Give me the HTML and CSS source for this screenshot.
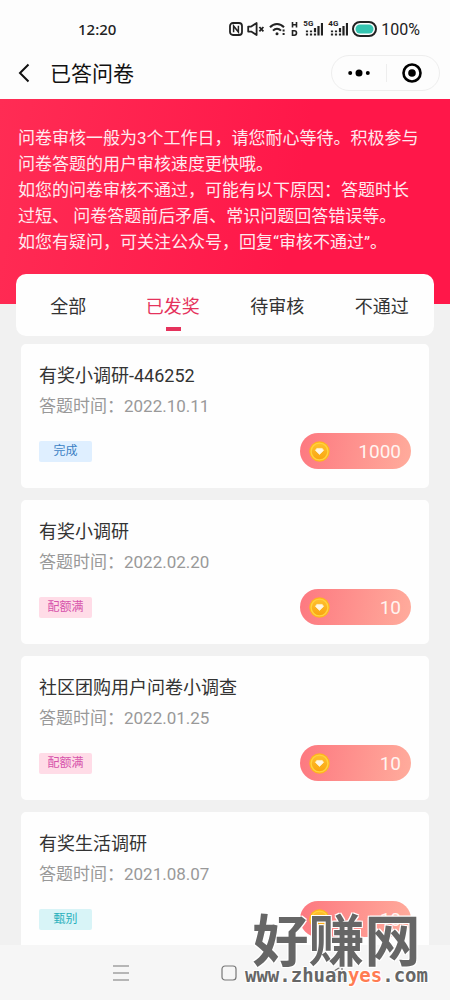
FILE: index.html
```html
<!DOCTYPE html>
<html lang="zh-CN">
<head>
<meta charset="utf-8">
<meta name="viewport" content="width=device-width, initial-scale=1">
<title>已答问卷</title>
<link rel="stylesheet" href="styles.css">
</head>
<body>
<svg class="defs" aria-hidden="true">
  <defs>
    <linearGradient id="gold" x1="0" y1="0" x2="0" y2="1"><stop offset="0" stop-color="#ffc12e"/><stop offset="1" stop-color="#f9a410"/></linearGradient>
    <symbol id="coin" viewBox="0 0 21 21">
      <circle cx="10.5" cy="10.5" r="10.2" fill="#ffb51c"/>
      <circle cx="10.5" cy="10.5" r="8.4" fill="url(#gold)" stroke="#ffd23f" stroke-width="1.4"/>
      <path d="M7.8 7.4h5.4l1.4 2-4.1 4-4.1-4z" fill="#fff7e2" stroke="#fff0c8" stroke-width=".8" stroke-linejoin="round"/>
    </symbol>
  </defs>
</svg>
<div class="screen">
  <div class="status">
    <time class="clock">12:20</time>
    <div class="indicators">
      <svg width="14" height="14" viewBox="0 0 14 14" fill="none" stroke="#222" stroke-width="1.8"><rect x="1" y="1" width="12" height="12" rx="3"/><path d="M4.6 10.3V4l4.8 6V3.7" stroke-width="1.5"/></svg>
      <svg width="18" height="14" viewBox="0 0 18 14" fill="none" stroke="#222" stroke-width="1.8" stroke-linejoin="round"><path d="M1.2 4.6h3L9.6 1v12L4.2 9.6h-3z"/><path d="M12.4 5l4 4.4M16.4 5l-4 4.4"/></svg>
      <svg width="18" height="14" viewBox="0 0 18 14" fill="none" stroke="#222" stroke-width="2"><path d="M1 5.2c4-4.3 10-4.3 14 0M4 8.6c2.4-2.5 5.6-2.5 8 0"/><circle cx="8" cy="11.8" r="1.5" fill="#222" stroke="none"/><path d="M14.6 7.4v2M14.6 11v2" /></svg>
      <svg width="7" height="14" viewBox="0 0 7 14" fill="none" stroke="#222" stroke-width="1.6"><path d="M1.5 0v5.6M5.5 0v5.6M1.5 2.8h4M1.5 8.8v4.4h1.8q2.2 0 2.2-2.2t-2.2-2.2z"/></svg>
      <span class="signal"><span class="generation">5G</span><svg width="20" height="14" viewBox="0 0 20 14" fill="none" stroke="#222" stroke-width="2.2"><path d="M4 8.4v1.8M4 11.4v2.2M8 8.4v1.8M8 11.4v2.2M12 6v4.2M12 11.4v2.2M15.5 4v9.6M19 1v12.6"/></svg></span>
      <span class="signal"><span class="generation">4G</span><svg width="20" height="14" viewBox="0 0 20 14" fill="none" stroke="#222" stroke-width="2.2"><path d="M4 8.4v1.8M4 11.4v2.2M8 8.4v1.8M8 11.4v2.2M12 6v4.2M12 11.4v2.2M15.5 4v9.6M19 1v12.6"/></svg></span>
      <svg width="25" height="16" viewBox="0 0 25 16"><rect x="1" y="1" width="23" height="14" rx="7" fill="#fff" stroke="#222" stroke-width="2"/><rect x="3.5" y="3.5" width="18" height="9" rx="4.5" fill="#35c4b0"/></svg>
      <span class="charge">100%</span>
    </div>
  </div>
  <header class="titlebar">
    <button class="back" aria-label="返回"><svg width="12" height="20" viewBox="0 0 12 20" fill="none" stroke="#111" stroke-width="2"><path d="M10.5 1.5L2 10l8.5 8.5"/></svg></button>
    <h1 class="title">已答问卷</h1>
    <div class="capsule">
      <button class="capsule-button" aria-label="更多"><svg width="22" height="8" viewBox="0 0 22 8"><circle cx="2.2" cy="4" r="2"/><circle cx="11" cy="4" r="3.5"/><circle cx="19.8" cy="4" r="2"/></svg></button>
      <button class="capsule-button" aria-label="关闭"><svg width="20" height="20" viewBox="0 0 20 20"><circle cx="10" cy="10" r="8.5" fill="none" stroke="#000" stroke-width="2.6"/><circle cx="10" cy="10" r="3.8"/></svg></button>
    </div>
  </header>
  <main class="content">
    <section class="notice">
      <p>问卷审核一般为3个工作日，请您耐心等待。积极参与<br>问卷答题的用户审核速度更快哦。</p>
      <p>如您的问卷审核不通过，可能有以下原因：答题时长<br>过短、 问卷答题前后矛盾、常识问题回答错误等。</p>
      <p>如您有疑问，可关注公众号，回复“审核不通过”。</p>
    </section>
    <nav class="tabs">
      <button class="tab">全部</button>
      <button class="tab active">已发奖</button>
      <button class="tab">待审核</button>
      <button class="tab">不通过</button>
    </nav>
    <div class="list">
      <article class="card">
        <h2 class="name">有奖小调研-446252</h2>
        <p class="date">答题时间：2022.10.11</p>
        <div class="result"><span class="tag done">完成</span><span class="reward"><svg width="21" height="21"><use href="#coin"/></svg>1000</span></div>
      </article>
      <article class="card">
        <h2 class="name">有奖小调研</h2>
        <p class="date">答题时间：2022.02.20</p>
        <div class="result"><span class="tag full">配额满</span><span class="reward"><svg width="21" height="21"><use href="#coin"/></svg>10</span></div>
      </article>
      <article class="card">
        <h2 class="name">社区团购用户问卷小调查</h2>
        <p class="date">答题时间：2022.01.25</p>
        <div class="result"><span class="tag full">配额满</span><span class="reward"><svg width="21" height="21"><use href="#coin"/></svg>10</span></div>
      </article>
      <article class="card">
        <h2 class="name">有奖生活调研</h2>
        <p class="date">答题时间：2021.08.07</p>
        <div class="result"><span class="tag screened">甄别</span><span class="reward"><svg width="21" height="21"><use href="#coin"/></svg>10</span></div>
      </article>
    </div>
  </main>
  <footer class="system">
    <button class="system-button" aria-label="菜单"><svg width="16" height="16" viewBox="0 0 16 16" stroke="#777" stroke-width="1.2"><path d="M0 1h16M0 8h16M0 15h16"/></svg></button>
    <button class="system-button" aria-label="主屏幕"><svg width="16" height="16" viewBox="0 0 16 16" fill="none" stroke="#777" stroke-width="1.2"><rect x="1" y="1" width="14" height="14" rx="3"/></svg></button>
    <button class="system-button" aria-label="后退"><svg width="16" height="16" viewBox="0 0 16 16" fill="none" stroke="#777" stroke-width="1.2"><path d="M13 1L2 8l11 7z" stroke-linejoin="round"/></svg></button>
  </footer>
  <div class="watermark">
    <span class="brand">好赚网</span>
    <span class="site">www.zhuan<span class="accent">yes</span>.com</span>
  </div>
</div>
</body>
</html>
```
FILE: styles.css
```css
* { box-sizing: border-box; }
body, h1, h2, p { margin: 0; font-weight: 400; }
body {
  background: #f1f1f1;
  color: #333;
  font-family: Roboto, "Noto Sans CJK SC", sans-serif;
}
button {
  padding: 0;
  border: 0;
  background: none;
  color: inherit;
  font: inherit;
}
svg { display: block; flex: none; }
.defs { position: absolute; width: 0; height: 0; }

.screen {
  position: relative;
  display: flex;
  flex-direction: column;
  height: 100vh;
  overflow: hidden;
}

.status {
  display: flex;
  justify-content: space-between;
  align-items: center;
  height: 46px;
  padding: 12px 30px 0 78px;
  background: #fdfdfd;
  color: #222;
}
.clock { font: 500 15px "Noto Sans", sans-serif; }
.indicators { display: flex; align-items: center; gap: 4px; }
.signal { position: relative; margin-left: 1px; }
.generation {
  position: absolute;
  top: -2px;
  left: 0;
  font-size: 8px;
  font-weight: 700;
  line-height: 8px;
}
.charge { font-size: 16px; }

.titlebar {
  display: flex;
  align-items: center;
  height: 53px;
  padding: 0 10px 0 18px;
  background: #fdfdfd;
  color: #111;
}
.back { padding-right: 20px; }
.title { flex: 1; padding-top: 2px; font-size: 21px; line-height: 30px; }
.capsule {
  display: flex;
  width: 109px;
  height: 36px;
  border: 1px solid #eee;
  border-radius: 18px;
}
.capsule-button { flex: 1; display: grid; place-items: center; }
.capsule-button + .capsule-button { position: relative; }
.capsule-button + .capsule-button::before {
  content: "";
  position: absolute;
  left: 0;
  width: 1px;
  height: 18px;
  background: #eee;
}

.content { flex: 1; min-height: 0; overflow: hidden; }
.notice {
  padding: 26px 16px 49px 18px;
  background: linear-gradient(100deg, #ff2c54, #ff1749 65%);
  color: #ffe9ee;
  font-size: 17px;
  line-height: 26px;
  white-space: nowrap;
}
.tabs {
  position: relative;
  display: flex;
  height: 62px;
  margin: -30px 16px 0;
  border-radius: 10px;
  background: #fefefe;
}
.tab { position: relative; flex: 1; font-size: 18px; }
.active { color: #e5325c; }
.active::after {
  content: "";
  position: absolute;
  bottom: 5px;
  left: 50%;
  width: 15px;
  height: 4px;
  margin-left: -7px;
  background: #e5325c;
}

.list { display: grid; gap: 12px; padding: 8px 21px; }
.card {
  padding: 19px 18px;
  border-radius: 5px;
  background: #fefefe;
}
.name { font-size: 18px; line-height: 26px; }
.date { margin-top: 4px; color: #999; font-size: 17px; line-height: 26px; }
.result {
  display: flex;
  justify-content: space-between;
  align-items: center;
  margin-top: 14px;
}
.tag {
  width: 53px;
  border-radius: 2px;
  font-size: 12px;
  line-height: 21px;
  text-align: center;
}
.done { background: #dfefff; color: #3c7fc4; }
.full { background: #ffdce7; color: #d653ab; }
.screened { background: #d8f4f7; color: #27afbb; }
.reward {
  display: flex;
  justify-content: space-between;
  align-items: center;
  width: 111px;
  height: 36px;
  padding: 0 10px 0 9px;
  border-radius: 18px;
  background: linear-gradient(100deg, #fd7880, #ffac9c);
  color: #fff4f0;
  font-size: 19px;
}

.system {
  display: flex;
  justify-content: center;
  gap: 92px;
  height: 55px;
  padding-left: 8px;
  background: #f6f6f6;
}
.system-button { display: grid; place-items: center; }

.watermark {
  position: absolute;
  right: 22px;
  bottom: 15px;
  display: flex;
  flex-direction: column;
  align-items: center;
  color: #666;
  font-weight: 700;
  text-shadow: 1px 1px #fff, -1px -1px #fff, 1px -1px #fff, -1px 1px #fff;
}
.brand { font-family: "Noto Sans CJK SC", sans-serif; font-size: 56px; line-height: 56px; }
.site { font-family: "DejaVu Sans Mono", monospace; font-size: 19px; line-height: 20px; }
.accent { color: #ff7c52; }
```
